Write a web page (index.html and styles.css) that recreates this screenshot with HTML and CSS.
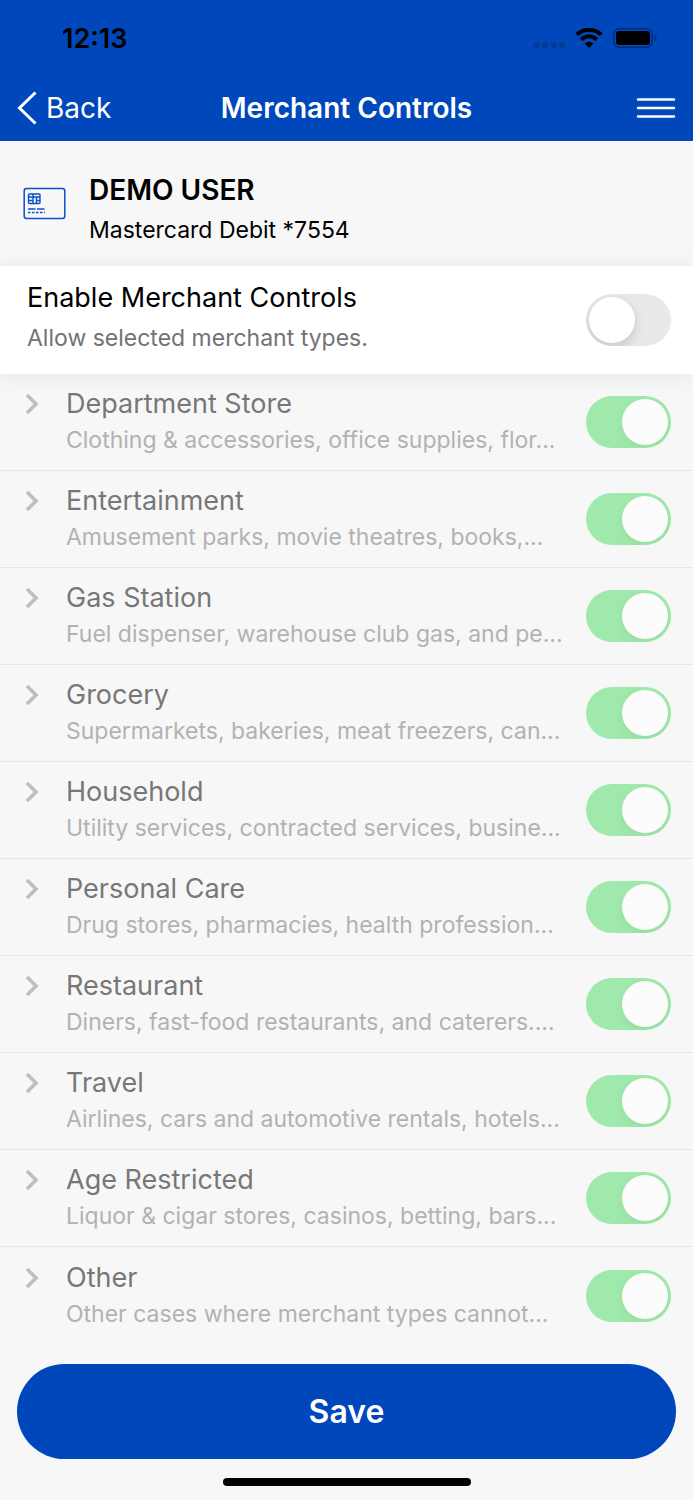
FILE: index.html
```html
<!DOCTYPE html>
<html lang="en">
<head>
    <meta charset="UTF-8">
    <meta name="viewport" content="width=device-width, initial-scale=1.0">
    <title>Merchant Controls</title>
    <link rel="stylesheet" href="styles.css">
</head>
<body>
    <header class="header">
        <div class="status-bar">
            <span class="time">12:13</span>
            <div class="status-icons">
                <svg width="32" height="8" viewBox="0 0 32 8" fill="#003a96">
                    <rect x="1" y="2" width="6" height="6" rx="2"/>
                    <rect x="9" y="2" width="6" height="6" rx="2"/>
                    <rect x="18" y="2" width="6" height="6" rx="2"/>
                    <rect x="26" y="2" width="6" height="6" rx="2"/>
                </svg>
                <svg width="28" height="20" viewBox="0 0 28 20" fill="none" stroke="#000">
                    <path d="M1.8 6.7a17.5 17.5 0 0 1 24.4 0" stroke-width="3.8"/>
                    <path d="M6.2 11.6a11.2 11.2 0 0 1 15.6 0" stroke-width="3.8"/>
                    <path d="M14 20l-4.3-4.4a6.2 6.2 0 0 1 8.6 0z" fill="#000" stroke="none"/>
                </svg>
                <svg width="44" height="20" viewBox="0 0 44 20">
                    <rect x="0.7" y="0.7" width="38.6" height="18.6" rx="5.5" fill="none" stroke="#002d75" stroke-width="1.4"/>
                    <rect x="3" y="3" width="34" height="14" rx="3" fill="#000"/>
                    <path d="M41.5 6.5c2.7 1.2 2.7 5.8 0 7z" fill="#002d75"/>
                </svg>
            </div>
        </div>
        <nav class="navbar">
            <a href="#" class="back">
                <svg width="20" height="34" viewBox="0 0 20 34" fill="none" stroke="#fff" stroke-width="3">
                    <path d="M18.5 1.5L2.5 17l16 15.5"/>
                </svg>
                Back
            </a>
            <h1>Merchant Controls</h1>
            <button type="button" class="menu" aria-label="Menu">
                <svg width="40" height="20" viewBox="0 0 40 20" stroke="#fff" stroke-width="2.4" stroke-linecap="round">
                    <path d="M2 1.5h36M2 10h36M2 18.5h36"/>
                </svg>
            </button>
        </nav>
    </header>

    <main>
        <!-- Selected card -->
        <section class="card-info">
            <svg width="44" height="34" viewBox="0 0 44 34" fill="none" stroke="#0a50c8">
                <rect x="2.2" y="1.5" width="40.6" height="30" rx="2.5" stroke-width="1.5"/>
                <g stroke-width="1.4">
                    <rect x="6.5" y="7" width="11.5" height="9.5" rx="1"/>
                    <path d="M6.5 10h5M6.500 13.500h5M11 7v9.500M18 10h-3.500v6.500M14.500 13.500h3.500M11 10h3.500"/>
                    <path d="M6 22h7.500M15 22h7.500"/>
                    <path d="M6 25.500h17" stroke-dasharray="2.500 1.500"/>
                </g>
            </svg>
            <div class="card-text">
                <h2>DEMO USER</h2>
                <p>Mastercard Debit *7554</p>
            </div>
        </section>

        <!-- Main switch -->
        <section class="enable">
            <label for="enableControls">
                <span class="title">Enable Merchant Controls</span>
                <span class="desc">Allow selected merchant types.</span>
            </label>
            <input type="checkbox" class="switch" id="enableControls">
        </section>

        <!-- Merchant types -->
        <ul class="types">
            <li>
                <button type="button" class="expand" aria-label="Expand" disabled><svg width="14" height="22" viewBox="0 0 14 22"><path d="M2 2l9 9-9 9"/></svg></button>
                <label for="department">
                    <span class="title">Department Store</span>
                    <span class="desc">Clothing &amp; accessories, office supplies, flor...</span>
                </label>
                <input type="checkbox" class="switch" id="department" checked disabled>
            </li>
            <li>
                <button type="button" class="expand" aria-label="Expand" disabled><svg width="14" height="22" viewBox="0 0 14 22"><path d="M2 2l9 9-9 9"/></svg></button>
                <label for="entertainment">
                    <span class="title">Entertainment</span>
                    <span class="desc">Amusement parks, movie theatres, books,...</span>
                </label>
                <input type="checkbox" class="switch" id="entertainment" checked disabled>
            </li>
            <li>
                <button type="button" class="expand" aria-label="Expand" disabled><svg width="14" height="22" viewBox="0 0 14 22"><path d="M2 2l9 9-9 9"/></svg></button>
                <label for="gas">
                    <span class="title">Gas Station</span>
                    <span class="desc">Fuel dispenser, warehouse club gas, and pe...</span>
                </label>
                <input type="checkbox" class="switch" id="gas" checked disabled>
            </li>
            <li>
                <button type="button" class="expand" aria-label="Expand" disabled><svg width="14" height="22" viewBox="0 0 14 22"><path d="M2 2l9 9-9 9"/></svg></button>
                <label for="grocery">
                    <span class="title">Grocery</span>
                    <span class="desc">Supermarkets, bakeries, meat freezers, can...</span>
                </label>
                <input type="checkbox" class="switch" id="grocery" checked disabled>
            </li>
            <li>
                <button type="button" class="expand" aria-label="Expand" disabled><svg width="14" height="22" viewBox="0 0 14 22"><path d="M2 2l9 9-9 9"/></svg></button>
                <label for="household">
                    <span class="title">Household</span>
                    <span class="desc">Utility services, contracted services, busine...</span>
                </label>
                <input type="checkbox" class="switch" id="household" checked disabled>
            </li>
            <li>
                <button type="button" class="expand" aria-label="Expand" disabled><svg width="14" height="22" viewBox="0 0 14 22"><path d="M2 2l9 9-9 9"/></svg></button>
                <label for="personal">
                    <span class="title">Personal Care</span>
                    <span class="desc">Drug stores, pharmacies, health profession...</span>
                </label>
                <input type="checkbox" class="switch" id="personal" checked disabled>
            </li>
            <li>
                <button type="button" class="expand" aria-label="Expand" disabled><svg width="14" height="22" viewBox="0 0 14 22"><path d="M2 2l9 9-9 9"/></svg></button>
                <label for="restaurant">
                    <span class="title">Restaurant</span>
                    <span class="desc">Diners, fast-food restaurants, and caterers....</span>
                </label>
                <input type="checkbox" class="switch" id="restaurant" checked disabled>
            </li>
            <li>
                <button type="button" class="expand" aria-label="Expand" disabled><svg width="14" height="22" viewBox="0 0 14 22"><path d="M2 2l9 9-9 9"/></svg></button>
                <label for="travel">
                    <span class="title">Travel</span>
                    <span class="desc">Airlines, cars and automotive rentals, hotels...</span>
                </label>
                <input type="checkbox" class="switch" id="travel" checked disabled>
            </li>
            <li>
                <button type="button" class="expand" aria-label="Expand" disabled><svg width="14" height="22" viewBox="0 0 14 22"><path d="M2 2l9 9-9 9"/></svg></button>
                <label for="age">
                    <span class="title">Age Restricted</span>
                    <span class="desc">Liquor &amp; cigar stores, casinos, betting, bars...</span>
                </label>
                <input type="checkbox" class="switch" id="age" checked disabled>
            </li>
            <li>
                <button type="button" class="expand" aria-label="Expand" disabled><svg width="14" height="22" viewBox="0 0 14 22"><path d="M2 2l9 9-9 9"/></svg></button>
                <label for="other">
                    <span class="title">Other</span>
                    <span class="desc">Other cases where merchant types cannot...</span>
                </label>
                <input type="checkbox" class="switch" id="other" checked disabled>
            </li>
        </ul>
    </main>

    <footer class="footer">
        <button type="button" class="save">Save</button>
        <div class="home-bar"></div>
    </footer>
</body>
</html>
```
FILE: styles.css
```css
* {
    box-sizing: border-box;
}
body {
    margin: 0;
    background: #f7f7f7;
    color: #000;
    font-family: Inter, "Liberation Sans", sans-serif;
}
h1, h2, p, ul {
    margin: 0;
    padding: 0;
}
button {
    border: none;
    padding: 0;
    background: none;
    font-family: inherit;
    cursor: pointer;
}
svg {
    display: block;
    flex: none;
}
.header {
    background: #0047bb;
    color: #fff;
}
.status-bar {
    display: flex;
    justify-content: space-between;
    align-items: center;
    height: 76px;
    padding: 0 36px 0 62px;
}
.time {
    color: #000;
    font-size: 27px;
    font-weight: 600;
}
.status-icons {
    display: flex;
    align-items: center;
    gap: 10px;
}
.status-icons svg:first-child {
    align-self: flex-end;
}
.navbar {
    display: grid;
    grid-template-columns: 1fr auto 1fr;
    align-items: center;
    height: 65px;
    padding: 0 17px 2px;
}
.back {
    display: flex;
    align-items: center;
    gap: 9px;
    color: #fff;
    font-size: 28px;
    text-decoration: none;
}
.navbar h1 {
    font-size: 28px;
    font-weight: 600;
}
.menu {
    justify-self: end;
}
.card-info {
    display: flex;
    align-items: center;
    gap: 23px;
    height: 125px;
    padding: 0 22px;
}
.card-text {
    padding-top: 12px;
}
.card-info h2 {
    font-size: 28px;
    font-weight: 600;
    line-height: 40px;
}
.card-info p {
    font-size: 23px;
    line-height: 40px;
}
.enable {
    display: flex;
    align-items: center;
    justify-content: space-between;
    height: 108px;
    padding: 0 22px 0 27px;
    background: #fff;
    box-shadow: 0 2px 20px rgba(0, 0, 0, 0.08);
}
.enable label {
    padding-bottom: 5px;
}
.title, .desc {
    display: block;
    white-space: nowrap;
}
.title {
    font-size: 27px;
    line-height: 36px;
}
.desc {
    font-size: 23px;
    line-height: 36px;
}
.enable .title {
    line-height: 40px;
}
.enable .desc {
    color: #727275;
    line-height: 40px;
}
.types {
    list-style: none;
}
.types li {
    display: flex;
    align-items: center;
    height: 97px;
    padding: 0 22px 0 25px;
    border-bottom: 1px solid #e6e6e6;
}
.types li:last-child {
    border-bottom: none;
}
.types label {
    flex: 1;
    min-width: 0;
}
.types .title {
    color: #777;
}
.types .desc {
    color: #b2b2b2;
}
.expand {
    width: 41px;
    height: 36px;
    margin-bottom: 36px;
}
.expand path {
    fill: none;
    stroke: #bebebe;
    stroke-width: 3.6;
}
.switch {
    appearance: none;
    flex: none;
    width: 85px;
    height: 52px;
    margin: 0;
    padding: 3px;
    border-radius: 26px;
    background: #e9e9eb;
    overflow: hidden;
}
.switch::before {
    content: "";
    display: block;
    width: 46px;
    height: 46px;
    border-radius: 50%;
    background: #fff;
    box-shadow: 0 4px 12px rgba(0, 0, 0, 0.16);
}
.switch:checked {
    background: #a0e9ac;
}
.switch:checked::before {
    margin-left: auto;
    background: #fcfcfc;
    box-shadow: 0 4px 12px rgba(0, 0, 0, 0.06);
}
.footer {
    padding: 20px 17px 14px;
}
.save {
    display: block;
    width: 100%;
    height: 95px;
    border-radius: 48px;
    background: #0047bb;
    color: #fff;
    font-size: 32px;
    font-weight: 600;
}
.home-bar {
    width: 248px;
    height: 8px;
    margin: 19px auto 0;
    border-radius: 4px;
    background: #000;
}
```
